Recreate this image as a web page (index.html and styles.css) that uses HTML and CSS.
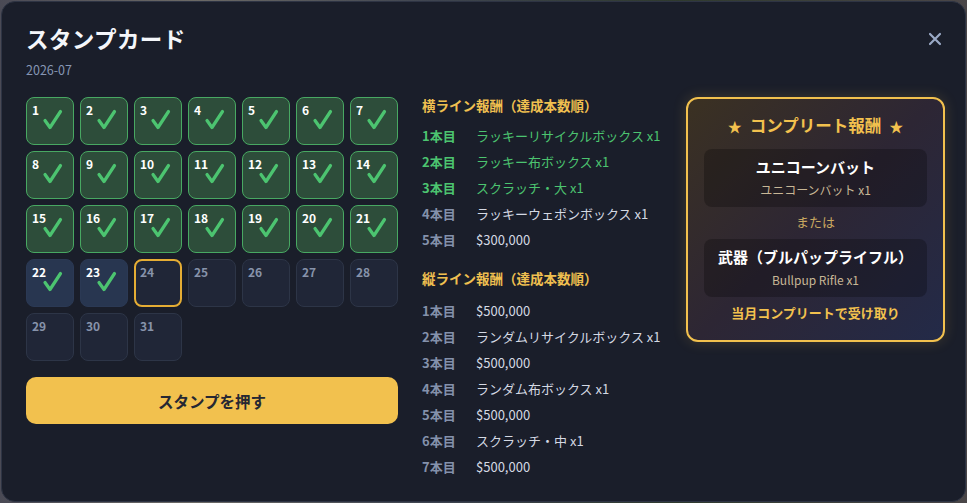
FILE: index.html
```html
<!DOCTYPE html>
<html lang="ja">
<head>
    <meta charset="UTF-8">
    <meta name="viewport" content="width=device-width, initial-scale=1.0">
    <title>スタンプカード</title>
    <link rel="stylesheet" href="styles.css">
</head>
<body>
    <div class="modal">
        <button class="close-btn" aria-label="閉じる">
            <svg width="14" height="14" viewBox="0 0 14 14"><path d="M2 2 L12 12 M12 2 L2 12" stroke="#9aa9c6" stroke-width="2.2" stroke-linecap="round"/></svg>
        </button>

        <h1 class="title">スタンプカード</h1>
        <div class="month">2026-07</div>

        <div class="layout">
            <div class="left-col">
                <div class="stamp-grid" id="stampGrid"></div>
                <button class="stamp-btn">スタンプを押す</button>
            </div>

            <div class="rewards">
                <h2 class="reward-head">横ライン報酬（達成本数順）</h2>
                <ul class="reward-list">
                    <li class="done"><span class="rank">1本目</span><span class="item">ラッキーリサイクルボックス x1</span></li>
                    <li class="done"><span class="rank">2本目</span><span class="item">ラッキー布ボックス x1</span></li>
                    <li class="done"><span class="rank">3本目</span><span class="item">スクラッチ・大 x1</span></li>
                    <li><span class="rank">4本目</span><span class="item">ラッキーウェポンボックス x1</span></li>
                    <li><span class="rank">5本目</span><span class="item">$300,000</span></li>
                </ul>

                <h2 class="reward-head second">縦ライン報酬（達成本数順）</h2>
                <ul class="reward-list vertical">
                    <li><span class="rank">1本目</span><span class="item">$500,000</span></li>
                    <li><span class="rank">2本目</span><span class="item">ランダムリサイクルボックス x1</span></li>
                    <li><span class="rank">3本目</span><span class="item">$500,000</span></li>
                    <li><span class="rank">4本目</span><span class="item">ランダム布ボックス x1</span></li>
                    <li><span class="rank">5本目</span><span class="item">$500,000</span></li>
                    <li><span class="rank">6本目</span><span class="item">スクラッチ・中 x1</span></li>
                    <li><span class="rank">7本目</span><span class="item">$500,000</span></li>
                </ul>
            </div>

            <div class="complete-card">
                <div class="complete-title"><span class="star">★</span>コンプリート報酬<span class="star">★</span></div>
                <div class="prize">
                    <div class="prize-name">ユニコーンバット</div>
                    <div class="prize-sub">ユニコーンバット x1</div>
                </div>
                <div class="or">または</div>
                <div class="prize">
                    <div class="prize-name">武器（ブルパップライフル）</div>
                    <div class="prize-sub">Bullpup Rifle x1</div>
                </div>
                <div class="complete-note">当月コンプリートで受け取り</div>
            </div>
        </div>
    </div>

    <script>
        const stamped = 23;
        const today = 24;
        const daysInMonth = 31;

        const checkSvg = '<svg class="check" width="22" height="22" viewBox="0 0 22 22"><path d="M4 11.5 L9 18.5 L19.5 2.5" fill="none" stroke="#4cc470" stroke-width="3.2" stroke-linecap="round" stroke-linejoin="round"/></svg>';

        function buildGrid() {
            const grid = document.getElementById("stampGrid");
            for (let d = 1; d <= daysInMonth; d++) {
                const cell = document.createElement("div");
                cell.className = "cell";
                if (d <= 21) {
                    cell.classList.add("line");
                } else if (d <= stamped) {
                    cell.classList.add("stamped");
                } else if (d === today) {
                    cell.classList.add("today");
                }
                let html = '<span class="num">' + d + '</span>';
                if (d <= stamped) {
                    html += checkSvg;
                }
                cell.innerHTML = html;
                grid.appendChild(cell);
            }
        }

        buildGrid();
    </script>
</body>
</html>
```

FILE: styles.css
```css
* {
    box-sizing: border-box;
    margin: 0;
    padding: 0;
}

body {
    width: 967px;
    height: 503px;
    overflow: hidden;
    padding: 1px;
    background: linear-gradient(90deg, #4a4a55 0%, #6c6a66 20%, #3e4450 45%, #2f3a2e 70%, #4a4648 100%);
    font-family: "Noto Sans CJK JP", "Noto Sans", sans-serif;
    color: #d4d9e3;
}

.modal {
    position: relative;
    height: 501px;
    background-color: #1a1e2a;
    border: 1px solid #2e3444;
    border-radius: 14px;
    padding: 20px 20px 0 24px;
    overflow: hidden;
}

.close-btn {
    position: absolute;
    top: 28px;
    right: 21px;
    width: 18px;
    height: 18px;
    border: none;
    background: none;
    display: flex;
    align-items: center;
    justify-content: center;
    cursor: pointer;
}

.title {
    font-size: 22.5px;
    font-weight: bold;
    line-height: 32px;
    letter-spacing: 0.4px;
    color: #f4f6fa;
}

.month {
    font-size: 12.5px;
    line-height: 16px;
    margin-top: 8px;
    color: #8696b4;
}

.layout {
    display: flex;
    align-items: flex-start;
    margin-top: 19px;
}

.left-col {
    width: 372px;
    flex-shrink: 0;
}

.stamp-grid {
    display: grid;
    grid-template-columns: repeat(7, 48px);
    gap: 6px;
}

.cell {
    width: 48px;
    height: 48px;
    border-radius: 8px;
    background-color: #202637;
    border: 1px solid #2d3547;
    display: grid;
    grid-template-areas: "a";
}

.cell .num,
.cell .check {
    grid-area: a;
}

.cell .num {
    justify-self: start;
    align-self: start;
    margin: 4px 0 0 5px;
    font-size: 12px;
    font-weight: bold;
    line-height: 16px;
    color: #8793aa;
}

.cell .check {
    justify-self: center;
    align-self: center;
    margin-top: -2px;
    margin-left: 3px;
}

.cell.line {
    background-color: #2d4d3a;
    border-color: #48a862;
}

.cell.line .num,
.cell.stamped .num {
    color: #ffffff;
}

.cell.stamped {
    background-color: #283650;
    border-color: #2b3954;
}

.cell.today {
    border: 2px solid #e5ad34;
}

.cell.today .num {
    margin: 3px 0 0 4px;
}

.stamp-btn {
    display: block;
    width: 100%;
    height: 47px;
    margin-top: 16px;
    border: none;
    border-radius: 10px;
    background-color: #f2c14e;
    color: #262833;
    font-family: "Noto Sans CJK JP", "Noto Sans", sans-serif;
    font-size: 15.5px;
    font-weight: bold;
    cursor: pointer;
}

.rewards {
    flex: 1;
    margin-left: 24px;
}

.reward-head {
    font-size: 13.5px;
    font-weight: bold;
    line-height: 18px;
    color: #f0c050;
    margin-top: -1px;
}

.reward-head.second {
    margin-top: 17px;
}

.reward-list {
    list-style: none;
    margin-top: 8px;
}

.reward-list.vertical {
    margin-top: 10px;
}

.reward-list li {
    display: flex;
    height: 26px;
    align-items: center;
    font-size: 13px;
}

.reward-list .rank {
    width: 54px;
    font-weight: bold;
    color: #8491ab;
}

.reward-list .item {
    color: #d4d9e3;
}

.reward-list li.done .rank,
.reward-list li.done .item {
    color: #4cc470;
}

.complete-card {
    width: 259px;
    flex-shrink: 0;
    margin-left: 24px;
    border: 2px solid #f2c14e;
    border-radius: 12px;
    padding: 15px 16px 19px;
    background: linear-gradient(135deg, #3b3122 0%, #2d2634 50%, #232a48 100%);
    box-shadow: 0 0 14px rgba(242, 193, 78, 0.18);
    text-align: center;
}

.complete-title {
    font-size: 16.5px;
    font-weight: bold;
    line-height: 22px;
    color: #f2c14e;
}

.complete-title .star {
    font-size: 14px;
    margin: 0 8px;
}

.prize {
    margin-top: 12px;
    background-color: rgba(0, 0, 0, 0.25);
    border-radius: 8px;
    padding: 7px 8px 9px;
}

.prize-name {
    font-size: 15px;
    font-weight: bold;
    line-height: 22px;
    color: #ffffff;
}

.prize-sub {
    font-size: 12px;
    line-height: 16px;
    margin-top: 4px;
    color: #c8b796;
}

.or {
    font-size: 13px;
    line-height: 16px;
    margin-top: 7px;
    margin-bottom: -3px;
    color: #c9a860;
}

.complete-note {
    font-size: 13px;
    font-weight: bold;
    line-height: 16px;
    margin-top: 8px;
    color: #f2c14e;
}
```
